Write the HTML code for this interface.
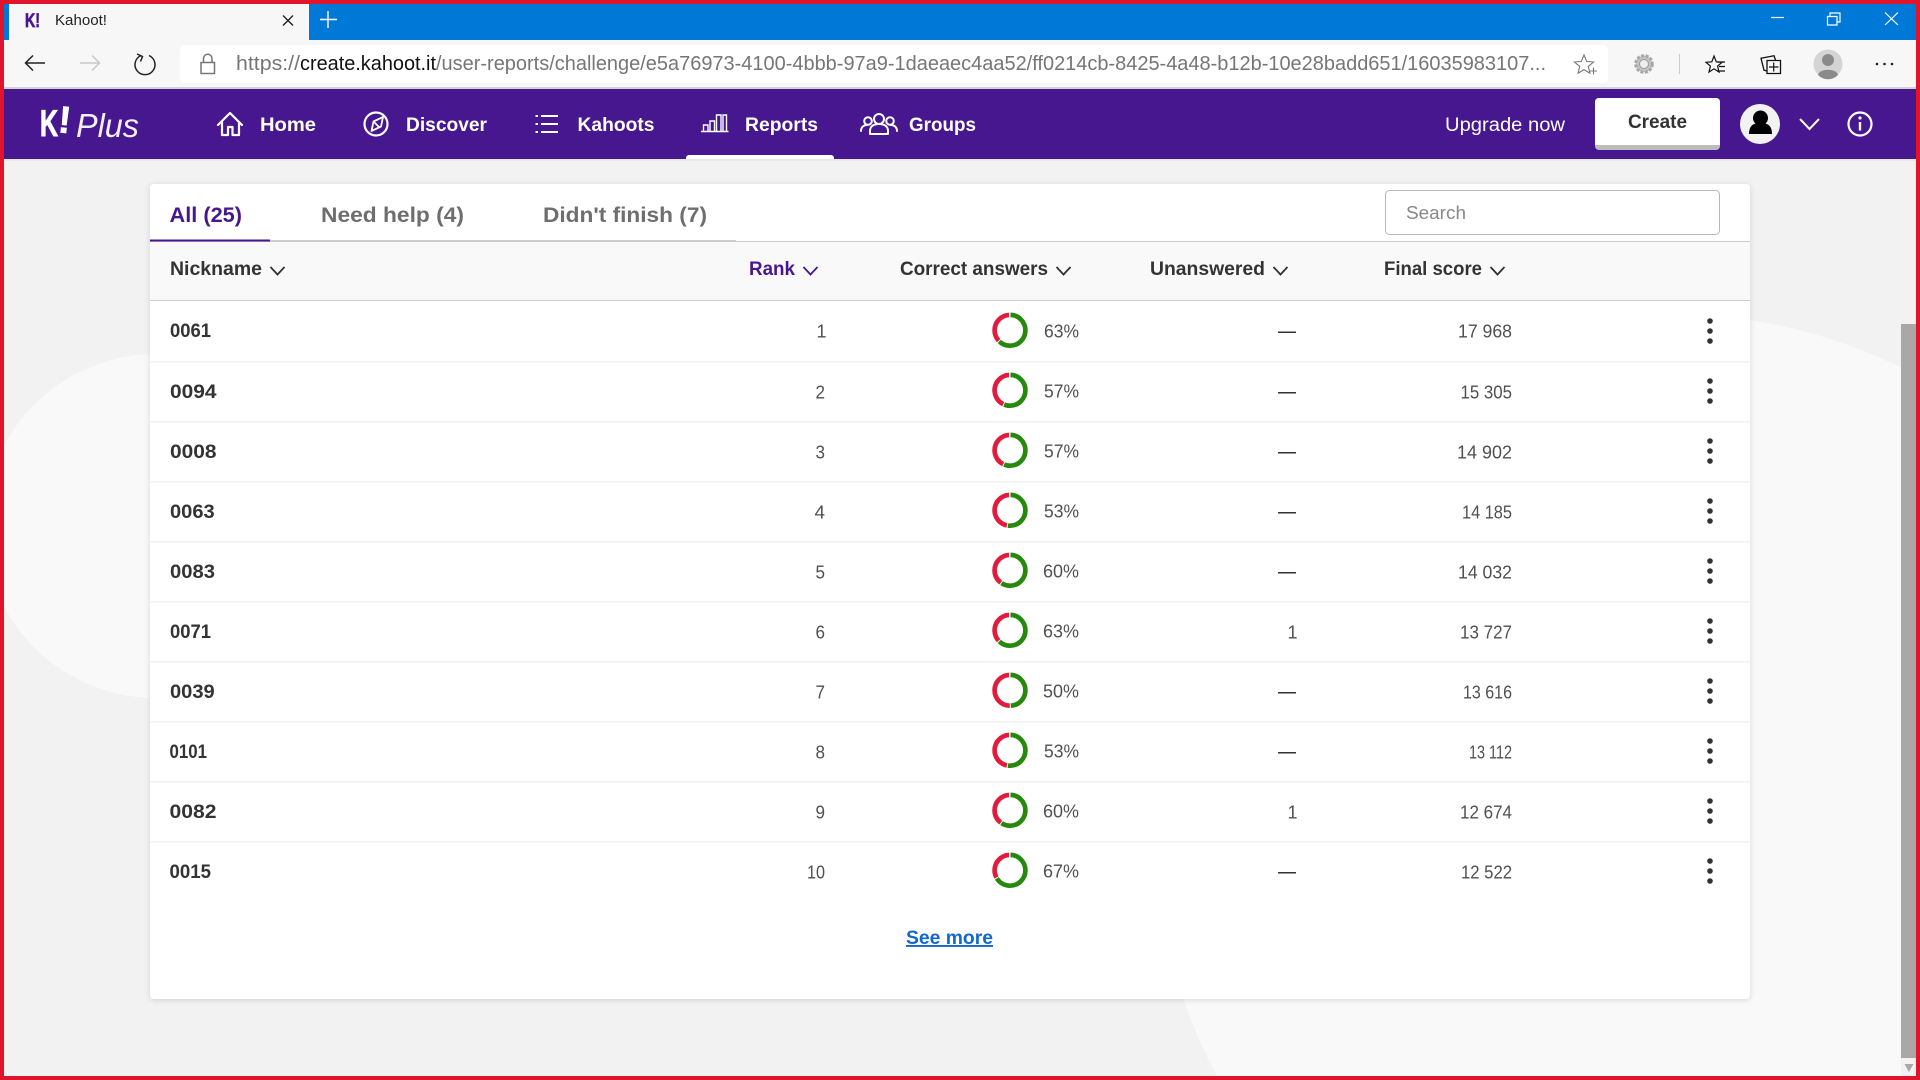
<!DOCTYPE html>
<html lang="en"><head><meta charset="utf-8"><title>Kahoot!</title>
<style>
html,body{margin:0;padding:0;width:1920px;height:1080px;overflow:hidden;background:#f2f2f2}
svg{display:block;position:absolute;left:0;top:0}
text{font-family:"Liberation Sans",sans-serif;white-space:pre}
.b{font-weight:700}
.nav{font-weight:700;font-size:19px;fill:#fff}
.th{font-weight:700;font-size:19px;fill:#333}
.nick{font-weight:700;font-size:19px;fill:#333}
.n{font-size:18px;fill:#505050}
.ch{fill:none;stroke:#333;stroke-width:1.8}
.ico{fill:none;stroke:#fff;stroke-width:2.2;stroke-linejoin:round;stroke-linecap:round}
.thin{fill:none;stroke:#fff;stroke-width:1.4}
.d{fill:#333}
.g{fill:none;stroke:#26890c;stroke-width:4.7}
.r{fill:none;stroke:#e21b3c;stroke-width:4.7}
.line{fill:#f2f2f2}
</style></head>
<body>
<svg width="1920" height="1080" viewBox="0 0 1920 1080" xmlns="http://www.w3.org/2000/svg">
<defs><filter id="s" x="-1%" y="-1%" width="102%" height="102%"><feDropShadow dx="0" dy="1" stdDeviation="3" flood-color="#000" flood-opacity=".14"/></filter></defs>
<rect width="1920" height="1080" fill="#f2f2f2"/>
<path d="M0 453.600A172 172 0 1 1 0 598.400Z" fill="#f9f9f9"/>
<path d="M1219 1080A517 517 0 0 1 1920 377.400V1080Z" fill="#f9f9f9"/>

<!-- browser chrome -->
<rect x="0" y="4" width="1920" height="36" fill="#0078d7"/>
<rect x="9" y="4" width="300" height="36" fill="#f7f7f7"/>
<text x="25" y="27" class="b" font-size="19" fill="#46178f" stroke="#46178f" stroke-width=".7" textLength="15" lengthAdjust="spacingAndGlyphs">K!</text>
<text x="55" y="25" font-size="15" fill="#222" textLength="52" lengthAdjust="spacingAndGlyphs">Kahoot!</text>
<path d="M283 15.500l10 10M293 15.500l-10 10" stroke="#222" stroke-width="1.4" fill="none"/>
<path d="M328 11v17M320 19.500h17" stroke="#fff" stroke-width="1.4" fill="none"/>
<path d="M1771 17.500h13" stroke="#fff" stroke-width="1.2"/>
<path d="M1827.500 16.500h9.500v8.500h-9.500zM1830 16v-3h10v9h-3" fill="none" stroke="#fff" stroke-width="1.2"/>
<path d="M1885 12.500l13 12.500M1898 12.500l-13 12.500" fill="none" stroke="#fff" stroke-width="1.2"/>

<rect x="0" y="40" width="1920" height="47" fill="#f7f7f7"/>
<rect x="0" y="87" width="1920" height="2" fill="#d2d2d2"/>
<rect x="180" y="45" width="1428" height="38" rx="5" fill="#fff"/>
<path d="M45 63H26M33 55.500l-7.500 7.500 7.500 7.500" fill="none" stroke="#222" stroke-width="1.5"/>
<path d="M80 63h19M92 55.500l7.500 7.500-7.500 7.500" fill="none" stroke="#c8c8c8" stroke-width="1.5"/>
<path d="M141 55.500a10 10 0 1 0 8 0M137 54l5.500 2.500-2 5" fill="none" stroke="#222" stroke-width="1.5"/>
<path d="M201 62.500h13.500v11h-13.500zM203.500 62.500v-4a4.200 4.200 0 0 1 8.500 0v4" fill="none" stroke="#767676" stroke-width="1.5"/>
<text x="236" y="70" font-size="20" fill="#767676" textLength="64" lengthAdjust="spacingAndGlyphs">https://</text>
<text x="300" y="70" font-size="20" fill="#111" textLength="136" lengthAdjust="spacingAndGlyphs">create.kahoot.it</text>
<text x="436" y="70" font-size="20" fill="#767676" textLength="1110" lengthAdjust="spacingAndGlyphs">/user-reports/challenge/e5a76973-4100-4bbb-97a9-1daeaec4aa52/ff0214cb-8425-4a48-b12b-10e28badd651/16035983107...</text>
<path d="M1584 55l2.700 6.400 6.800.600-5.200 4.500 1.600 6.700-5.900-3.600-5.900 3.600 1.600-6.700-5.200-4.500 6.800-.600z" fill="none" stroke="#777" stroke-width="1.1"/>
<path d="M1590 71h7M1593.500 67.500v7" stroke="#777" stroke-width="1.1" fill="none"/>
<circle cx="1644" cy="64" r="8.300" fill="#c4c4c4" stroke="#a8a8a8" stroke-width="3" stroke-dasharray="3 1.500"/>
<circle cx="1644" cy="64" r="4.500" fill="#ededed" stroke="#999" stroke-width="1"/>
<rect x="1679" y="54" width="1" height="20" fill="#ccc"/>
<path d="M1714 56l2.300 5.800 5.700.500-4.400 3.800 1.400 6-5-3.300-5 3.300 1.400-6-4.400-3.800 5.800-.500z" fill="none" stroke="#111" stroke-width="1.200"/>
<path d="M1717 62h8M1719 66.500h6M1717 71h8" stroke="#111" stroke-width="1.300" fill="none"/>
<path d="M1767 60.500h13.500v13h-13.500zM1767 71l-3-.800-3-12 13-2.500 1.500 4.300" fill="none" stroke="#111" stroke-width="1.300"/>
<path d="M1773.700 62.500v9M1769 67h9.500" stroke="#111" stroke-width="1.200"/>
<circle cx="1828" cy="64" r="14.500" fill="#d4d4d4"/>
<circle cx="1828" cy="60" r="6" fill="#8a8a8a"/>
<path d="M1818 75c1-7 19-7 20 0a14 14 0 0 1-20 0z" fill="#8a8a8a"/>
<circle cx="1877" cy="64" r="1.300" fill="#222"/><circle cx="1884.500" cy="64" r="1.300" fill="#222"/><circle cx="1892" cy="64" r="1.300" fill="#222"/>

<!-- purple nav -->
<rect x="0" y="89" width="1920" height="70" fill="#46178f"/>
<rect x="0" y="159" width="1920" height="2" fill="#e8e8e8"/>
<text x="40" y="136" class="b" font-size="37" fill="#fff" stroke="#fff" stroke-width="1" textLength="18" lengthAdjust="spacingAndGlyphs">K</text>
<text x="58" y="133" class="b" font-size="38" fill="#fff" stroke="#fff" stroke-width=".6" transform="rotate(6 66 124)">!</text>
<text x="76" y="137" font-size="33" font-style="italic" fill="#f2eefa" textLength="63" lengthAdjust="spacingAndGlyphs">Plus</text>

<path class="ico" d="M218 125l12-12 12 12M222 122v13h6v-8h4.500v8h6.500v-13"/>
<text x="260" y="131" class="nav" textLength="56" lengthAdjust="spacingAndGlyphs">Home</text>
<circle cx="376" cy="124" r="11.500" class="ico"/>
<path class="ico" style="stroke-width:1.800" d="M383 117l-9.500 4.500-2 9.500 9.500-4.500zM373.500 121.500l5 5"/>
<text x="406" y="131" class="nav" textLength="81" lengthAdjust="spacingAndGlyphs">Discover</text>
<path d="M541 116h17M541 124h17M541 132h17" stroke="#fff" stroke-width="2" fill="none"/>
<path d="M535.500 116h2.500M535.500 124h2.500M535.500 132h2.500" stroke="#fff" stroke-width="2" fill="none"/>
<text x="577.500" y="131" class="nav" textLength="77" lengthAdjust="spacingAndGlyphs">Kahoots</text>
<path class="thin" d="M701 131.500h27.500M703.500 131v-6h4.500v6M710 131v-10h4.500v10M716.500 131v-16h4.500v16M723 131v-16h3.500v16"/>
<text x="745" y="131" class="nav" textLength="73" lengthAdjust="spacingAndGlyphs">Reports</text>
<circle cx="879" cy="119" r="5" class="ico" style="stroke-width:2"/>
<circle cx="868" cy="121" r="3.800" class="ico" style="stroke-width:2"/>
<circle cx="890" cy="121" r="3.800" class="ico" style="stroke-width:2"/>
<path class="ico" style="stroke-width:2" d="M870 134v-3c0-5 4-7 9-7s9 2 9 7v3zM861 131c0-4 3-6 6-6M897 131c0-4-3-6-6-6"/>
<text x="909" y="131" class="nav" textLength="67" lengthAdjust="spacingAndGlyphs">Groups</text>
<path d="M686 159v-1a3 3 0 0 1 3-3h142a3 3 0 0 1 3 3v1z" fill="#fff"/>

<text x="1445" y="131" font-size="19" fill="#fff" textLength="120" lengthAdjust="spacingAndGlyphs">Upgrade now</text>
<rect x="1595" y="98" width="125" height="52" rx="4" fill="#bcbcbc"/>
<path d="M1595 145V102a4 4 0 0 1 4-4h117a4 4 0 0 1 4 4v43z" fill="#fff"/>
<text x="1628" y="128" class="b" font-size="19" fill="#333" textLength="59" lengthAdjust="spacingAndGlyphs">Create</text>
<circle cx="1760" cy="124" r="20" fill="#f2f2f2"/>
<circle cx="1760.500" cy="118" r="7.500" fill="#000"/>
<path d="M1749 134c0-9 5-11 11.500-11s11.500 2 11.500 11z" fill="#000"/>
<path d="M1800 119l9.500 10 9.500-10" fill="none" stroke="#fff" stroke-width="2"/>
<circle cx="1860" cy="124" r="11.500" fill="none" stroke="#fff" stroke-width="2.200"/>
<circle cx="1860" cy="118" r="1.600" fill="#fff"/>
<path d="M1860 122v8.500" stroke="#fff" stroke-width="2.400"/>

<!-- card -->
<rect x="150" y="184" width="1600" height="815" rx="4" fill="#fff" filter="url(#s)"/>
<text x="169.500" y="222" class="b" font-size="21" fill="#46178f" textLength="72.500" lengthAdjust="spacingAndGlyphs">All (25)</text>
<text x="321" y="222" class="b" font-size="21" fill="#6e6e6e" textLength="143" lengthAdjust="spacingAndGlyphs">Need help (4)</text>
<text x="543" y="222" class="b" font-size="21" fill="#6e6e6e" textLength="164" lengthAdjust="spacingAndGlyphs">Didn't finish (7)</text>
<rect x="1385.500" y="190.500" width="334" height="44" rx="4" fill="#fff" stroke="#b8b8b8" stroke-width="1"/>
<text x="1406" y="219" font-size="18" fill="#888" textLength="60" lengthAdjust="spacingAndGlyphs">Search</text>

<rect x="150" y="241" width="1600" height="59" fill="#f9f9f9"/>
<rect x="150" y="241" width="1600" height="1" fill="#ccc"/>
<rect x="270" y="240" width="466" height="2" fill="#ccc"/>
<rect x="150" y="239.500" width="120" height="2" fill="#46178f"/>
<rect x="150" y="300" width="1600" height="1" fill="#ccc"/>

<text x="170" y="275" class="th" textLength="92" lengthAdjust="spacingAndGlyphs">Nickname</text>
<path class="ch" d="M270.500 267l7 7.500 7-7.500"/>
<text x="749" y="275" class="th" style="fill:#46178f" textLength="46" lengthAdjust="spacingAndGlyphs">Rank</text>
<path class="ch" style="stroke:#46178f" d="M803.500 267l7 7.500 7-7.500"/>
<text x="900" y="275" class="th" textLength="148" lengthAdjust="spacingAndGlyphs">Correct answers</text>
<path class="ch" d="M1056.500 267l7 7.500 7-7.500"/>
<text x="1150" y="275" class="th" textLength="115" lengthAdjust="spacingAndGlyphs">Unanswered</text>
<path class="ch" d="M1273.500 267l7 7.500 7-7.500"/>
<text x="1384" y="275" class="th" textLength="98" lengthAdjust="spacingAndGlyphs">Final score</text>
<path class="ch" d="M1490.500 267l7 7.500 7-7.500"/>

<!-- rows -->
<rect class="line" x="150" y="361" width="1600" height="1.500"/>
<rect class="line" x="150" y="421" width="1600" height="1.500"/>
<rect class="line" x="150" y="481" width="1600" height="1.500"/>
<rect class="line" x="150" y="541" width="1600" height="1.500"/>
<rect class="line" x="150" y="601" width="1600" height="1.500"/>
<rect class="line" x="150" y="661" width="1600" height="1.500"/>
<rect class="line" x="150" y="721" width="1600" height="1.500"/>
<rect class="line" x="150" y="781" width="1600" height="1.500"/>
<rect class="line" x="150" y="841" width="1600" height="1.500"/>

<!-- row 1 -->
<text class="nick" x="170" y="337" textLength="41" lengthAdjust="spacingAndGlyphs">0061</text>
<text class="n" x="816.500" y="337.500">1</text>
<circle class="g" cx="1010" cy="330.300" r="15.400" pathLength="100" stroke-dasharray="62 100" stroke-dashoffset="-.5" transform="rotate(-90 1010 330.300)"/>
<circle class="r" cx="1010" cy="330.300" r="15.400" pathLength="100" stroke-dasharray="36 100" stroke-dashoffset="-63.500" transform="rotate(-90 1010 330.300)"/>
<text class="n" x="1044" y="337.500" textLength="35" lengthAdjust="spacingAndGlyphs">63%</text>
<rect x="1278" y="331.500" width="18" height="1.500" fill="#333"/>
<text class="n" x="1458" y="337.500" textLength="54" lengthAdjust="spacingAndGlyphs">17 968</text>
<circle class="d" cx="1710" cy="321" r="2.800"/><circle class="d" cx="1710" cy="331" r="2.800"/><circle class="d" cx="1710" cy="341" r="2.800"/>

<!-- row 2 -->
<text class="nick" x="170" y="398" textLength="46.500" lengthAdjust="spacingAndGlyphs">0094</text>
<text class="n" x="815.500" y="398.500" textLength="9.500" lengthAdjust="spacingAndGlyphs">2</text>
<circle class="g" cx="1010" cy="390.300" r="15.400" pathLength="100" stroke-dasharray="56 100" stroke-dashoffset="-.5" transform="rotate(-90 1010 390.300)"/>
<circle class="r" cx="1010" cy="390.300" r="15.400" pathLength="100" stroke-dasharray="42 100" stroke-dashoffset="-57.500" transform="rotate(-90 1010 390.300)"/>
<text class="n" x="1044" y="397.500" textLength="35" lengthAdjust="spacingAndGlyphs">57%</text>
<rect x="1278" y="392" width="18" height="1.500" fill="#333"/>
<text class="n" x="1460.500" y="398.500" textLength="51.500" lengthAdjust="spacingAndGlyphs">15 305</text>
<circle class="d" cx="1710" cy="381" r="2.800"/><circle class="d" cx="1710" cy="391" r="2.800"/><circle class="d" cx="1710" cy="401" r="2.800"/>

<!-- row 3 -->
<text class="nick" x="170" y="458" textLength="46.500" lengthAdjust="spacingAndGlyphs">0008</text>
<text class="n" x="815.500" y="458.500" textLength="9.500" lengthAdjust="spacingAndGlyphs">3</text>
<circle class="g" cx="1010" cy="450.300" r="15.400" pathLength="100" stroke-dasharray="56 100" stroke-dashoffset="-.5" transform="rotate(-90 1010 450.300)"/>
<circle class="r" cx="1010" cy="450.300" r="15.400" pathLength="100" stroke-dasharray="42 100" stroke-dashoffset="-57.500" transform="rotate(-90 1010 450.300)"/>
<text class="n" x="1044" y="457.500" textLength="35" lengthAdjust="spacingAndGlyphs">57%</text>
<rect x="1278" y="452" width="18" height="1.500" fill="#333"/>
<text class="n" x="1457" y="458.500" textLength="55" lengthAdjust="spacingAndGlyphs">14 902</text>
<circle class="d" cx="1710" cy="441" r="2.800"/><circle class="d" cx="1710" cy="451" r="2.800"/><circle class="d" cx="1710" cy="461" r="2.800"/>

<!-- row 4 -->
<text class="nick" x="170" y="518" textLength="44.700" lengthAdjust="spacingAndGlyphs">0063</text>
<text class="n" x="814.500" y="518.500" textLength="10.500" lengthAdjust="spacingAndGlyphs">4</text>
<circle class="g" cx="1010" cy="510.300" r="15.400" pathLength="100" stroke-dasharray="52 100" stroke-dashoffset="-.5" transform="rotate(-90 1010 510.300)"/>
<circle class="r" cx="1010" cy="510.300" r="15.400" pathLength="100" stroke-dasharray="46 100" stroke-dashoffset="-53.500" transform="rotate(-90 1010 510.300)"/>
<text class="n" x="1044" y="517.500" textLength="35" lengthAdjust="spacingAndGlyphs">53%</text>
<rect x="1278" y="512" width="18" height="1.500" fill="#333"/>
<text class="n" x="1462" y="518.500" textLength="50" lengthAdjust="spacingAndGlyphs">14 185</text>
<circle class="d" cx="1710" cy="501" r="2.800"/><circle class="d" cx="1710" cy="511" r="2.800"/><circle class="d" cx="1710" cy="521" r="2.800"/>

<!-- row 5 -->
<text class="nick" x="170" y="578" textLength="45" lengthAdjust="spacingAndGlyphs">0083</text>
<text class="n" x="815.500" y="578.500" textLength="9.500" lengthAdjust="spacingAndGlyphs">5</text>
<circle class="g" cx="1010" cy="570.300" r="15.400" pathLength="100" stroke-dasharray="59 100" stroke-dashoffset="-.5" transform="rotate(-90 1010 570.300)"/>
<circle class="r" cx="1010" cy="570.300" r="15.400" pathLength="100" stroke-dasharray="39 100" stroke-dashoffset="-60.500" transform="rotate(-90 1010 570.300)"/>
<text class="n" x="1043" y="577.500" textLength="36" lengthAdjust="spacingAndGlyphs">60%</text>
<rect x="1278" y="572" width="18" height="1.500" fill="#333"/>
<text class="n" x="1458" y="578.500" textLength="54" lengthAdjust="spacingAndGlyphs">14 032</text>
<circle class="d" cx="1710" cy="561" r="2.800"/><circle class="d" cx="1710" cy="571" r="2.800"/><circle class="d" cx="1710" cy="581" r="2.800"/>

<!-- row 6 -->
<text class="nick" x="170" y="638" textLength="41" lengthAdjust="spacingAndGlyphs">0071</text>
<text class="n" x="815.500" y="638.500" textLength="9.500" lengthAdjust="spacingAndGlyphs">6</text>
<circle class="g" cx="1010" cy="630.300" r="15.400" pathLength="100" stroke-dasharray="62 100" stroke-dashoffset="-.5" transform="rotate(-90 1010 630.300)"/>
<circle class="r" cx="1010" cy="630.300" r="15.400" pathLength="100" stroke-dasharray="36 100" stroke-dashoffset="-63.500" transform="rotate(-90 1010 630.300)"/>
<text class="n" x="1043" y="637.500" textLength="36" lengthAdjust="spacingAndGlyphs">63%</text>
<text class="n" x="1287.500" y="638.500">1</text>
<text class="n" x="1460" y="638.500" textLength="52" lengthAdjust="spacingAndGlyphs">13 727</text>
<circle class="d" cx="1710" cy="621" r="2.800"/><circle class="d" cx="1710" cy="631" r="2.800"/><circle class="d" cx="1710" cy="641" r="2.800"/>

<!-- row 7 -->
<text class="nick" x="170" y="698" textLength="44.700" lengthAdjust="spacingAndGlyphs">0039</text>
<text class="n" x="815.500" y="698.500" textLength="9.500" lengthAdjust="spacingAndGlyphs">7</text>
<circle class="g" cx="1010" cy="690.300" r="15.400" pathLength="100" stroke-dasharray="49 100" stroke-dashoffset="-.5" transform="rotate(-90 1010 690.300)"/>
<circle class="r" cx="1010" cy="690.300" r="15.400" pathLength="100" stroke-dasharray="49 100" stroke-dashoffset="-50.500" transform="rotate(-90 1010 690.300)"/>
<text class="n" x="1043" y="697.500" textLength="36" lengthAdjust="spacingAndGlyphs">50%</text>
<rect x="1278" y="692" width="18" height="1.500" fill="#333"/>
<text class="n" x="1463" y="698.500" textLength="49" lengthAdjust="spacingAndGlyphs">13 616</text>
<circle class="d" cx="1710" cy="681" r="2.800"/><circle class="d" cx="1710" cy="691" r="2.800"/><circle class="d" cx="1710" cy="701" r="2.800"/>

<!-- row 8 -->
<text class="nick" x="169.500" y="758" textLength="37.500" lengthAdjust="spacingAndGlyphs">0101</text>
<text class="n" x="815.500" y="758.500" textLength="9.500" lengthAdjust="spacingAndGlyphs">8</text>
<circle class="g" cx="1010" cy="750.300" r="15.400" pathLength="100" stroke-dasharray="52 100" stroke-dashoffset="-.5" transform="rotate(-90 1010 750.300)"/>
<circle class="r" cx="1010" cy="750.300" r="15.400" pathLength="100" stroke-dasharray="46 100" stroke-dashoffset="-53.500" transform="rotate(-90 1010 750.300)"/>
<text class="n" x="1044" y="757.500" textLength="35" lengthAdjust="spacingAndGlyphs">53%</text>
<rect x="1278" y="752" width="18" height="1.500" fill="#333"/>
<text class="n" x="1469" y="758.500" textLength="43" lengthAdjust="spacingAndGlyphs">13 112</text>
<circle class="d" cx="1710" cy="741" r="2.800"/><circle class="d" cx="1710" cy="751" r="2.800"/><circle class="d" cx="1710" cy="761" r="2.800"/>

<!-- row 9 -->
<text class="nick" x="169.500" y="818" textLength="47" lengthAdjust="spacingAndGlyphs">0082</text>
<text class="n" x="815.500" y="818.500" textLength="9.500" lengthAdjust="spacingAndGlyphs">9</text>
<circle class="g" cx="1010" cy="810.300" r="15.400" pathLength="100" stroke-dasharray="59 100" stroke-dashoffset="-.5" transform="rotate(-90 1010 810.300)"/>
<circle class="r" cx="1010" cy="810.300" r="15.400" pathLength="100" stroke-dasharray="39 100" stroke-dashoffset="-60.500" transform="rotate(-90 1010 810.300)"/>
<text class="n" x="1043" y="817.500" textLength="36" lengthAdjust="spacingAndGlyphs">60%</text>
<text class="n" x="1287.500" y="818.500">1</text>
<text class="n" x="1460" y="818.500" textLength="52" lengthAdjust="spacingAndGlyphs">12 674</text>
<circle class="d" cx="1710" cy="801" r="2.800"/><circle class="d" cx="1710" cy="811" r="2.800"/><circle class="d" cx="1710" cy="821" r="2.800"/>

<!-- row 10 -->
<text class="nick" x="169.500" y="878" textLength="41.500" lengthAdjust="spacingAndGlyphs">0015</text>
<text class="n" x="807" y="878.500" textLength="18" lengthAdjust="spacingAndGlyphs">10</text>
<circle class="g" cx="1010" cy="870.300" r="15.400" pathLength="100" stroke-dasharray="66 100" stroke-dashoffset="-.5" transform="rotate(-90 1010 870.300)"/>
<circle class="r" cx="1010" cy="870.300" r="15.400" pathLength="100" stroke-dasharray="32 100" stroke-dashoffset="-67.500" transform="rotate(-90 1010 870.300)"/>
<text class="n" x="1043" y="877.500" textLength="36" lengthAdjust="spacingAndGlyphs">67%</text>
<rect x="1278" y="872" width="18" height="1.500" fill="#333"/>
<text class="n" x="1461" y="878.500" textLength="51" lengthAdjust="spacingAndGlyphs">12 522</text>
<circle class="d" cx="1710" cy="861" r="2.800"/><circle class="d" cx="1710" cy="871" r="2.800"/><circle class="d" cx="1710" cy="881" r="2.800"/>

<text x="906" y="944" class="b" font-size="19" fill="#1368ce" text-decoration="underline" textLength="87" lengthAdjust="spacingAndGlyphs">See more</text>

<!-- scrollbar -->
<rect x="1901" y="1058" width="15" height="18" fill="#f2f2f2"/>
<rect x="1901" y="324" width="15" height="734" fill="#a8a8a8"/>
<path d="M1904.500 1064h9l-4.500 8z" fill="#a8a8a8"/>

<!-- red frame -->
<rect x="0" y="0" width="1920" height="4" fill="#e0142a"/>
<rect x="0" y="1076" width="1920" height="4" fill="#e0142a"/>
<rect x="0" y="0" width="4" height="1080" fill="#e0142a"/>
<rect x="1916" y="0" width="4" height="1080" fill="#e0142a"/>
</svg>
</body></html>
